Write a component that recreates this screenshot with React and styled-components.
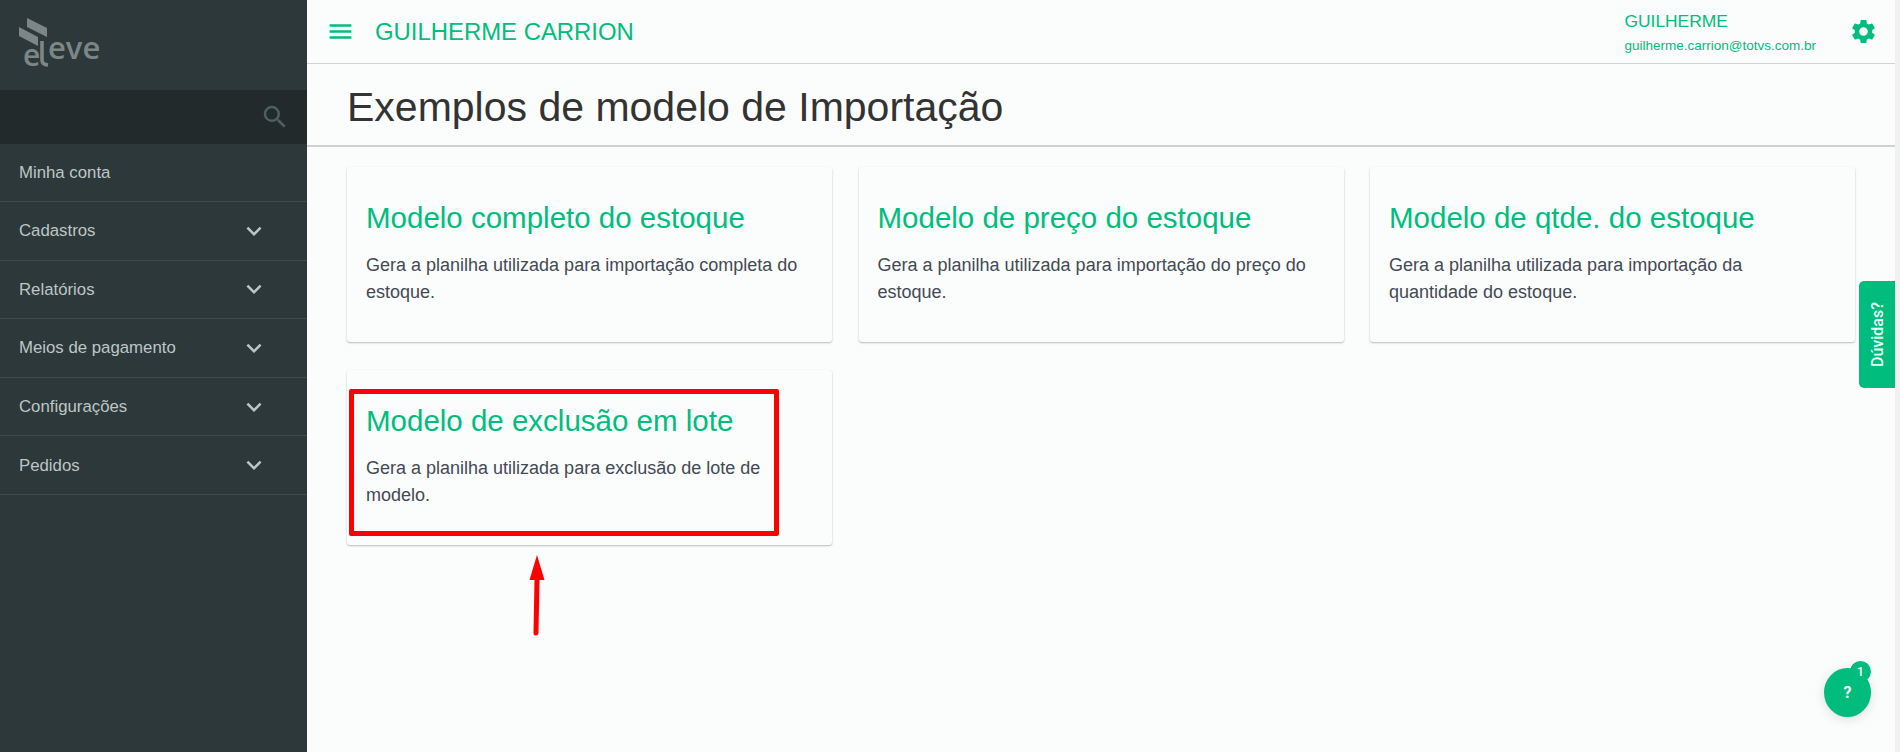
import React from "react";
import styled, { createGlobalStyle } from "styled-components";

const GREEN = "#00bd7e";

const Global = createGlobalStyle`
  html, body { margin: 0; padding: 0; height: 100%; overflow: hidden; }
  body { font-family: "Liberation Sans", Arial, sans-serif; background: #fbfcfc; }
  * { box-sizing: border-box; }
`;

const Page = styled.div`
  position: relative;
  display: flex;
  width: 1900px;
  height: 752px;
  overflow: hidden;
`;

const Sidebar = styled.aside`
  flex: 0 0 307px;
  display: flex;
  flex-direction: column;
  background: #2d383a;
`;

const LogoBox = styled.div`
  height: 90px;
  display: flex;
  align-items: flex-start;
`;

const LogoText = styled.text`
  font-family: "Open Sans", sans-serif;
  font-size: ${(p) => p.$size}px;
  font-weight: 600;
  fill: #7d8687;
`;

const SearchBand = styled.div`
  height: 54px;
  background: #232a2b;
  display: flex;
  align-items: center;
  justify-content: flex-end;
  padding-right: 17px;
  color: #4f6062;
`;

const NavList = styled.nav`
  display: flex;
  flex-direction: column;
`;

const NavRow = styled.div`
  height: ${(p) => (p.$first ? "58px" : "58.6px")};
  padding: 0 38px 0 19px;
  display: flex;
  align-items: center;
  justify-content: space-between;
  border-bottom: 1px solid #424b4c;
  color: #bcc6c5;
  font-size: 16.8px;
`;

const NavLabel = styled.span`
  padding-top: 1px;
`;

const Main = styled.main`
  flex: 1;
  min-width: 0;
  display: flex;
  flex-direction: column;
  background: #fbfcfc;
`;

const TopBar = styled.header`
  height: 64px;
  border-bottom: 1px solid #cfd2d2;
  display: flex;
  align-items: center;
  padding: 0 17px 0 19px;
  color: ${GREEN};
`;

const BarTitle = styled.div`
  margin-left: 20px;
  font-size: 23.9px;
  flex: 1;
`;

const User = styled.div`
  display: flex;
  flex-direction: column;
  gap: 7px;
  margin-right: 33px;
`;

const UserName = styled.div`
  font-size: 17.4px;
  line-height: 20px;
`;

const UserMail = styled.div`
  font-size: 13.5px;
  line-height: 15px;
`;

const TitleBar = styled.div`
  height: 83px;
  border-bottom: 2px solid #cfd2d2;
  padding: 5px 0 0 40px;
  display: flex;
  align-items: center;
`;

const Heading = styled.h1`
  margin: 0;
  font-size: 41px;
  font-weight: 400;
  color: #333;
`;

const CardGrid = styled.div`
  display: grid;
  grid-template-columns: repeat(3, 485px);
  grid-auto-rows: 175px;
  column-gap: 26.5px;
  row-gap: 28px;
  padding: 20px 0 0 40px;
`;

const Card = styled.article`
  background: #fbfcfc;
  border-radius: 3px;
  padding: 33px 19px 0;
  box-shadow: 0 1px 2px rgba(0, 0, 0, 0.26), 0 0 1px rgba(0, 0, 0, 0.04);
`;

const CardTitle = styled.h2`
  margin: 0 0 16px;
  font-size: 29.5px;
  line-height: 36px;
  font-weight: 400;
  color: ${GREEN};
`;

const CardText = styled.p`
  margin: 0;
  max-width: 436px;
  font-size: 18px;
  line-height: 27px;
  color: #434a54;
`;

const ScrollTrack = styled.div`
  flex: 0 0 5px;
  background: #f1f1f1;
`;

const Highlight = styled.div`
  position: absolute;
  left: 349px;
  top: 389px;
  width: 430px;
  height: 147px;
  border: 5px solid #ff0000;
  border-radius: 2px;
`;

const ArrowMark = styled.svg`
  position: absolute;
  left: 525px;
  top: 553px;
`;

const HelpTab = styled.div`
  position: absolute;
  left: 1859px;
  top: 281px;
  width: 36px;
  height: 107px;
  background: ${GREEN};
  border-radius: 5px 0 0 5px;
  color: #e9fbf4;
  font-family: Roboto, sans-serif;
  font-size: 16px;
  font-weight: 500;
  display: flex;
  align-items: center;
  justify-content: center;
`;

const HelpTabLabel = styled.span`
  writing-mode: vertical-rl;
  transform: rotate(180deg);
`;

const ChatButton = styled.div`
  position: absolute;
  left: 1824px;
  top: 668px;
  width: 47px;
  height: 49px;
  border-radius: 50%;
  background: ${GREEN};
  box-shadow: 0 2px 12px rgba(0, 0, 0, 0.12);
  color: #fff;
  font-family: Roboto, sans-serif;
  font-size: 16px;
  font-weight: 700;
  display: flex;
  align-items: center;
  justify-content: center;
`;

const ChatBadge = styled.div`
  position: absolute;
  left: 26px;
  top: -7px;
  width: 21px;
  height: 21px;
  border-radius: 50%;
  background: ${GREEN};
  font-size: 12px;
  font-weight: 500;
  display: flex;
  align-items: center;
  justify-content: center;
`;

const MatIcon = ({ d, size = 24 }) => (
  <svg width={size} height={size} viewBox="0 0 24 24" fill="currentColor" aria-hidden="true">
    <path d={d} />
  </svg>
);

const ICONS = {
  menu: "M3 18h18v-2H3v2zm0-5h18v-2H3v2zm0-7v2h18V6H3z",
  search:
    "M15.5 14h-.79l-.28-.27A6.471 6.471 0 0 0 16 9.5 6.5 6.5 0 1 0 9.5 16c1.61 0 3.09-.59 4.23-1.57l.27.28v.79l5 4.99L20.49 19l-4.99-5zm-6 0C7.01 14 5 11.99 5 9.5S7.01 5 9.5 5 14 7.01 14 9.5 11.99 14 9.5 14z",
  chevron: "M16.59 8.59L12 13.17 7.41 8.59 6 10l6 6 6-6z",
  gear:
    "M19.14 12.94c.04-.3.06-.61.06-.94 0-.32-.02-.64-.07-.94l2.03-1.58a.49.49 0 0 0 .12-.61l-1.92-3.32a.488.488 0 0 0-.59-.22l-2.39.96c-.5-.38-1.03-.7-1.62-.94l-.36-2.54a.484.484 0 0 0-.48-.41h-3.84c-.24 0-.43.17-.47.41l-.36 2.54c-.59.24-1.13.57-1.62.94l-2.39-.96c-.22-.08-.47 0-.59.22L2.74 8.87c-.12.21-.08.47.12.61l2.03 1.58c-.05.3-.09.63-.09.94s.02.64.07.94l-2.03 1.58a.49.49 0 0 0-.12.61l1.92 3.32c.12.22.37.29.59.22l2.39-.96c.5.38 1.03.7 1.62.94l.36 2.54c.05.24.24.41.48.41h3.84c.24 0 .44-.17.47-.41l.36-2.54c.59-.24 1.13-.56 1.62-.94l2.39.96c.22.08.47 0 .59-.22l1.92-3.32c.12-.22.07-.47-.12-.61l-2.01-1.58zM12 15.6c-1.98 0-3.6-1.62-3.6-3.6s1.62-3.6 3.6-3.6 3.6 1.62 3.6 3.6-1.62 3.6-3.6 3.6z",
};

const NAV = [
  { label: "Minha conta", first: true },
  { label: "Cadastros", more: true },
  { label: "Relatórios", more: true },
  { label: "Meios de pagamento", more: true },
  { label: "Configurações", more: true },
  { label: "Pedidos", more: true },
];

const CARDS = [
  {
    title: "Modelo completo do estoque",
    text: "Gera a planilha utilizada para importação completa do estoque.",
  },
  {
    title: "Modelo de preço do estoque",
    text: "Gera a planilha utilizada para importação do preço do estoque.",
  },
  {
    title: "Modelo de qtde. do estoque",
    text: "Gera a planilha utilizada para importação da quantidade do estoque.",
  },
  {
    title: "Modelo de exclusão em lote",
    text: "Gera a planilha utilizada para exclusão de lote de modelo.",
  },
];

const Logo = () => (
  <svg width="120" height="80" viewBox="0 0 120 80" aria-label="eleve">
    <polygon points="27,18 47,28 47,37 27,27" fill="#7d8687" />
    <polygon points="19,27 38,37 38,46 19,36" fill="#7d8687" />
    <path d="M42 41 V60 Q42 64.5 48 65" fill="none" stroke="#7d8687" strokeWidth="3.6" />
    <LogoText $size={30} x="23" y="65.5">e</LogoText>
    <LogoText $size={31} x="48" y="58.5">eve</LogoText>
  </svg>
);

export default function App() {
  return (
    <>
      <Global />
      <Page>
        <Sidebar>
          <LogoBox>
            <Logo />
          </LogoBox>
          <SearchBand>
            <MatIcon d={ICONS.search} size={30} />
          </SearchBand>
          <NavList>
            {NAV.map((item) => (
              <NavRow key={item.label} $first={item.first}>
                <NavLabel>{item.label}</NavLabel>
                {item.more && <MatIcon d={ICONS.chevron} size={30} />}
              </NavRow>
            ))}
          </NavList>
        </Sidebar>
        <Main>
          <TopBar>
            <MatIcon d={ICONS.menu} size={29} />
            <BarTitle>GUILHERME CARRION</BarTitle>
            <User>
              <UserName>GUILHERME</UserName>
              <UserMail>guilherme.carrion@totvs.com.br</UserMail>
            </User>
            <MatIcon d={ICONS.gear} size={29} />
          </TopBar>
          <TitleBar>
            <Heading>Exemplos de modelo de Importação</Heading>
          </TitleBar>
          <CardGrid>
            {CARDS.map((c) => (
              <Card key={c.title}>
                <CardTitle>{c.title}</CardTitle>
                <CardText>{c.text}</CardText>
              </Card>
            ))}
          </CardGrid>
        </Main>
        <ScrollTrack />
        <Highlight />
        <ArrowMark width="24" height="84" viewBox="0 0 24 84">
          <polygon points="12,2 19.5,27 4.5,27" fill="#ff0000" />
          <line x1="12" y1="26" x2="11" y2="80" stroke="#ff0000" strokeWidth="5" strokeLinecap="round" />
        </ArrowMark>
        <HelpTab>
          <HelpTabLabel>Dúvidas?</HelpTabLabel>
        </HelpTab>
        <ChatButton>
          ?
          <ChatBadge>1</ChatBadge>
        </ChatButton>
      </Page>
    </>
  );
}
